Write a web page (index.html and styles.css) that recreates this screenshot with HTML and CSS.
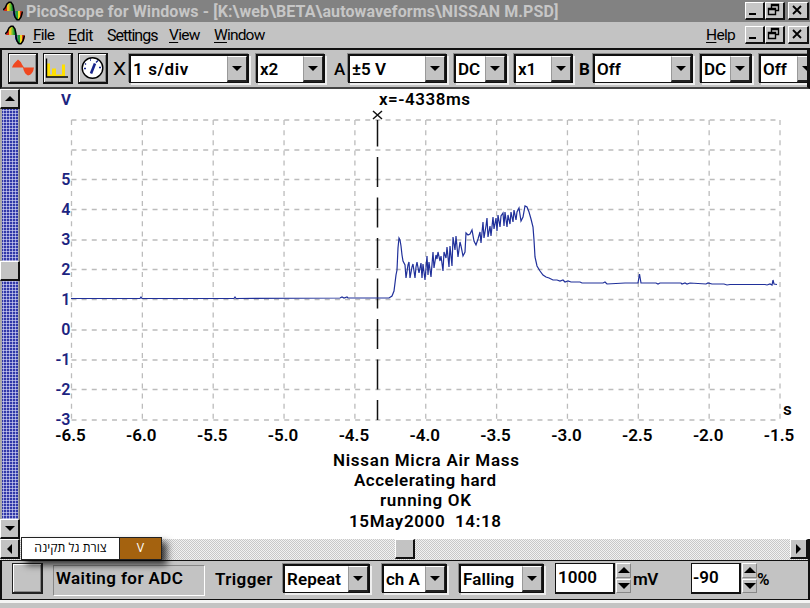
FILE: index.html
```html
<!DOCTYPE html>
<html lang="en">
  <head>
    <meta charset="UTF-8" />
    <meta name="viewport" content="width=device-width, initial-scale=1.0" />
    <title>PicoScope for Windows</title>
    <link rel="stylesheet" href="styles.css">
  </head>
  <body>
    <svg width="0" height="0" class="defs">
      <symbol id="logo" viewBox="0 0 20 20">
        <path d="M1 9L4 4L5 2V10H1Z" fill="#d02818" />
        <path d="M4 3L7 1V10H4Z" fill="#f0c820" />
        <path d="M6.500 1L9 2V10H6.500Z" fill="#70c030" />
        <path d="M8.500 2L11 6V10H8.500Z" fill="#108838" />
        <path d="M10 10H12.500V18L10 14Z" fill="#2838c8" />
        <path d="M12.500 10H15V19H12.500Z" fill="#20a038" />
        <path d="M15 10H17V19H15Z" fill="#f0d820" />
        <path d="M17 10H19.500V14L17 18Z" fill="#d83818" />
        <path d="M0 9L2 7L4 3L6 1.200H8L10 4L11 9V12L12 16L14 18.800H16L18 16L19.500 10.500" fill="none" stroke="#000" stroke-width="1.500" />
      </symbol>
      <symbol id="min" viewBox="0 0 16 14"><path d="M3 10h7v2H3z" /></symbol>
      <symbol id="restore" viewBox="0 0 16 14">
        <path d="M5.500 6V1.500h7v6H10M5 2.500h8M2.500 5.500h7v6h-7zM2 6.500h8" fill="none" stroke="#000" stroke-width="1.400" />
      </symbol>
      <symbol id="close" viewBox="0 0 16 14"><path d="M4 3l8 8M12 3l-8 8" stroke="#000" stroke-width="1.800" /></symbol>
    </svg>

    <div class="titlebar">
      <svg class="logo"><use href="#logo" /></svg>
      <span class="title">PicoScope for Windows - [K:\web\BETA\autowaveforms\NISSAN M.PSD]</span>
      <div class="winbtns">
        <button><svg><use href="#min" /></svg></button>
        <button><svg><use href="#restore" /></svg></button>
        <button class="close"><svg><use href="#close" /></svg></button>
      </div>
    </div>

    <div class="menubar">
      <svg class="logo"><use href="#logo" /></svg>
      <span class="m-file"><u>F</u>ile</span>
      <span class="m-edit"><u>E</u>dit</span>
      <span class="m-settings">Settings</span>
      <span class="m-view"><u>V</u>iew</span>
      <span class="m-window"><u>W</u>indow</span>
      <span class="help"><u>H</u>elp</span>
      <div class="winbtns">
        <button><svg><use href="#min" /></svg></button>
        <button><svg><use href="#restore" /></svg></button>
        <button class="close"><svg><use href="#close" /></svg></button>
      </div>
    </div>

    <div class="toolbar">
      <div class="tool"><svg viewBox="0 0 26 26"><path d="M3 13Q4 10 6 8L9 5Q12 7 13 10L15 13ZM14 13H25Q24 20 19 21Q15 19 14 13Z" fill="#f04820" /></svg></div>
      <div class="tool"><svg viewBox="0 0 26 26"><path d="M3 22V9h3v11h2V14h4v6h6V10h3v12z" fill="#ffe000" /><path d="M2.500 4v18.500H24" fill="none" stroke="#000" stroke-width="1.400" /></svg></div>
      <div class="tool"><svg viewBox="0 0 26 26"><circle cx="13.500" cy="13.500" r="10.300" fill="#fff" stroke="#000" stroke-width="1.400" /><path d="M12 19L16 9" stroke="#18248c" stroke-width="2.600" /><path d="M5 14h2M6 9l1 1M11 5.500h1M17 8l2-2M20 13h2" stroke="#18248c" stroke-width="1.300" /></svg></div>
      <span class="lbl lx">X</span>
      <div class="combo c-time"><span>1 s/div</span><i></i></div>
      <div class="combo c-zoom"><span>x2</span><i></i></div>
      <span class="lbl la">A</span>
      <div class="combo c-range"><span>±5 V</span><i></i></div>
      <div class="combo c-dc"><span>DC</span><i></i></div>
      <div class="combo c-mul"><span>x1</span><i></i></div>
      <span class="lbl lb">B</span>
      <div class="combo c-off"><span>Off</span><i></i></div>
      <div class="combo c-dc2"><span>DC</span><i></i></div>
      <div class="combo c-last"><span>Off</span><i></i></div>
    </div>

    <div class="main">
      <div class="vscroll">
        <div class="sbtn up"></div>
        <div class="thumb"></div>
        <div class="sbtn down"></div>
      </div>
      <svg class="chart" width="790" height="450" viewBox="20 89 790 450">
        <g id="grid"></g>
        <g id="labels"></g>
        <path class="cursor" d="M377.500 120V420" />
        <path class="cross" d="M373 111l9 8M382 111l-9 8" />
        <polyline id="wave" />
        <text class="unit" x="61" y="105" textLength="10" lengthAdjust="spacingAndGlyphs">V</text>
        <text x="379" y="105" textLength="91">x=-4338ms</text>
        <text x="783" y="415">s</text>
        <text x="333" y="466" textLength="186">Nissan Micra Air Mass</text>
        <text x="354" y="486" textLength="142">Accelerating hard</text>
        <text x="380" y="506" textLength="91">running OK</text>
        <text x="349" y="527" textLength="152" xml:space="preserve">15May2000  14:18</text>
      </svg>
    </div>

    <div class="hscroll">
      <div class="sbtn left"></div>
      <div class="thumb"></div>
      <div class="sbtn right"></div>
      <div class="tag"><span class="tag-text" lang="he" dir="rtl">צורת גל תקינה</span><span class="tag-unit">V</span></div>
    </div>

    <div class="status">
      <div class="square"></div>
      <div class="message">Waiting for ADC</div>
      <span class="lbl trigger">Trigger</span>
      <div class="combo s-repeat"><span>Repeat</span><i></i></div>
      <div class="combo s-ch"><span>ch A</span><i></i></div>
      <div class="combo s-fall"><span>Falling</span><i></i></div>
      <div class="field f-mv">1000</div>
      <div class="spin"><b class="inc"></b><b class="dec"></b></div>
      <span class="lbl unit-mv">mV</span>
      <div class="field f-pc">-90</div>
      <div class="spin"><b class="inc"></b><b class="dec"></b></div>
      <span class="lbl unit-pc">%</span>
    </div>
    <script src="chart.js"></script>
  </body>
</html>
```
FILE: styles.css
```css
* {
  box-sizing: border-box;
}

body {
  margin: 0;
  width: 810px;
  height: 608px;
  overflow: hidden;
  display: flex;
  flex-direction: column;
  background: #c3c3c3;
  color: #000;
  font-family: Roboto, "Liberation Sans", sans-serif;
  font-size: 17px;
}

.defs {
  position: absolute;
}

.logo {
  width: 20px;
  height: 20px;
  flex: none;
}

.titlebar {
  height: 22px;
  flex: none;
  display: flex;
  align-items: center;
  background: #828282;
  color: #c6c6c6;
  font-weight: bold;
  font-size: 16px;
  padding: 0 1px 0 3px;
}

.title {
  margin-left: 3px;
  letter-spacing: 0.1px;
  white-space: nowrap;
}

.winbtns {
  display: flex;
  margin-left: auto;
}

.winbtns button {
  width: 20px;
  height: 18px;
  padding: 0;
  background: #c6c6c6;
  border: solid #111;
  border-width: 1px 2px 2px 1px;
  border-top-color: #fff;
  border-left-color: #fff;
  display: flex;
}

.winbtns .close {
  margin-left: 3px;
  width: 21px;
}

.winbtns svg {
  width: 16px;
  height: 14px;
  flex: none;
}

.menubar {
  height: 26px;
  flex: none;
  display: flex;
  align-items: center;
  padding: 0 1px 0 5px;
  font-size: 15.5px;
}

.menubar u {
  text-underline-offset: 2px;
  text-decoration-skip-ink: none;
}

.m-file { width: 35px; margin-left: 8px; letter-spacing: -0.8px; }
.m-edit { width: 39px; letter-spacing: -0.5px; }
.m-settings { width: 62px; letter-spacing: -1px; }
.m-view { width: 45px; letter-spacing: -0.7px; }
.m-window { letter-spacing: -0.8px; }

.m-settings,
.m-edit {
  font-size: 16px;
}

.help {
  margin-left: auto;
  letter-spacing: -0.7px;
}

.menubar .winbtns {
  margin-left: 10px;
}

.toolbar {
  height: 41px;
  flex: none;
  display: flex;
  align-items: center;
  overflow: hidden;
  border: solid #111;
  border-width: 2px 3px 2px 2px;
  border-bottom-color: #444;
  padding-left: 6px;
}

.tool {
  width: 30px;
  height: 31px;
  flex: none;
  margin-right: 5px;
  border: 1px solid #111;
  border-width: 1px 2px 2px 1px;
  box-shadow: inset 1px 1px #fff, inset -1px -1px #888;
}

.tool svg {
  display: block;
  width: 26px;
  height: 27px;
}

.lbl {
  font-weight: 600;
  flex: none;
}

.lx { width: 16px; font-size: 19px; font-weight: normal; transform: scaleX(1.1); transform-origin: left; }
.la { margin-left: 9px; width: 14px; font-weight: 500; }
.lb { margin-left: 6px; width: 14px; font-weight: bold; }

.combo {
  height: 29px;
  flex: none;
  display: flex;
  background: #fff;
  border: 2px solid #111;
  border-bottom-width: 1px;
  box-shadow: -1px -1px #888, 2px 2px #eee;
  overflow: hidden;
  font-weight: 600;
  letter-spacing: 0;
  line-height: 26px;
}

.combo span {
  flex: 1;
  padding-left: 2px;
  white-space: nowrap;
}

.combo i {
  width: 20px;
  flex: none;
  border: solid #222;
  border-width: 1px 1px 2px 1px;
  border-top-color: #fff;
  border-left-color: #999;
  background: #c3c3c3;
  display: flex;
  align-items: center;
  justify-content: center;
}

.combo i::after {
  content: "";
  border: solid transparent;
  border-width: 5px 5px 0;
  border-top-color: #000;
}

.c-time { width: 120px; letter-spacing: 0.6px; }
.c-zoom { width: 69px; margin-left: 7px; }
.c-range { width: 99px; }
.c-dc { width: 53px; margin-left: 7px; }
.c-mul { width: 59px; margin-left: 7px; }
.c-off { width: 100px; }
.c-dc2 { width: 52px; margin-left: 7px; }
.c-last { width: 60px; margin-left: 7px; }

.main {
  height: 450px;
  flex: none;
  display: flex;
}

.vscroll {
  width: 20px;
  display: flex;
  flex-direction: column;
  border-right: 1px solid #777;
  background-color: #3038a8;
  background-image:
    linear-gradient(90deg, #aaa 2px, transparent 2px, transparent 18px, #aaa 18px),
    repeating-linear-gradient(90deg, rgba(225, 225, 250, 0.6) 0 1px, transparent 1px 3px),
    repeating-linear-gradient(rgba(225, 225, 250, 0.6) 0 1px, transparent 1px 3px);
}

.sbtn,
.thumb {
  width: 20px;
  height: 20px;
  flex: none;
  background: #c3c3c3;
  border: solid #111;
  border-width: 1px 2px 2px 1px;
  border-top-color: #fff;
  border-left-color: #fff;
  display: flex;
  align-items: center;
  justify-content: center;
}

.sbtn::after {
  content: "";
  border: 5px solid transparent;
}

.up::after { border-width: 0 5px 5px; border-bottom-color: #000; }
.down::after { border-width: 5px 5px 0; border-top-color: #000; }
.left::after { border-width: 5px 5px 5px 0; border-right-color: #000; }
.right::after { border-width: 5px 0 5px 5px; border-left-color: #000; }

.vscroll .thumb {
  margin-top: 152px;
}

.vscroll .down {
  margin-top: auto;
}

.chart {
  background: #fff;
  flex: none;
}

.chart text {
  font-size: 17px;
  font-weight: 600;
}

.chart .tick-x {
  text-anchor: middle;
}

.chart .tick-y {
  text-anchor: end;
  fill: #1c2480;
  font-size: 16px;
}

.chart .unit {
  fill: #1c2480;
  font-size: 15px;
  font-weight: bold;
}

#grid path {
  fill: none;
  stroke: #bcbcbc;
  stroke-width: 1.3;
  stroke-dasharray: 5 5.13;
}

#wave {
  fill: none;
  stroke: #20309a;
  stroke-width: 1.2;
}

.cursor {
  stroke: #111;
  stroke-width: 1.5;
  stroke-dasharray: 30 10.5;
  stroke-dashoffset: 3.5;
}

.cross {
  fill: none;
  stroke: #111;
  stroke-width: 1.5;
}

.hscroll {
  height: 21px;
  flex: none;
  position: relative;
  display: flex;
  border-right: 2px solid #111;
  background: repeating-conic-gradient(#c8c8c8 0 25%, #f2f2f2 0 50%) 0 0 / 2px 2px;
}

.hscroll .thumb {
  margin-left: 375px;
}

.hscroll .right {
  margin-left: auto;
  width: 18px;
}

.tag {
  position: absolute;
  left: 21px;
  top: -2px;
  width: 141px;
  height: 23px;
  display: flex;
  border: 1px solid #222;
  box-shadow: 5px 5px 7px rgba(0, 0, 0, 0.75);
  font-family: "Open Sans", "DejaVu Sans", sans-serif;
  font-size: 12.3px;
  line-height: 20px;
  text-align: center;
}

.tag-text {
  width: 97px;
  background: #fff;
  white-space: nowrap;
}

.tag-unit {
  flex: 1;
  background: #a4620f;
  color: #fff;
  border-left: 1px solid #222;
}

.status {
  height: 40px;
  flex: none;
  display: flex;
  align-items: flex-start;
  padding: 2px 0 0 10px;
  border: solid #111;
  border-width: 1px 2px 1px 2px;
  box-shadow: 0 3px #f4f4f4;
}

.square {
  width: 31px;
  height: 31px;
  border: 2px solid #222;
  border-width: 1px 2px 2px 1px;
  box-shadow: inset 1px 1px #fff, inset -1px -1px #888;
}

.message {
  width: 152px;
  height: 31px;
  margin: 2px 0 0 10px;
  padding-left: 2px;
  border: 1px solid #fff;
  border-top-color: #888;
  border-left-color: #888;
  font-weight: 600;
  letter-spacing: 0.4px;
  line-height: 24px;
  white-space: nowrap;
}

.status .lbl {
  margin-top: 6px;
}

.status .trigger {
  margin-left: 10px;
  width: 68px;
  letter-spacing: 0.4px;
}

.status .combo {
  margin-top: 1px;
}

.s-repeat { width: 87px; }
.s-ch { width: 65px; margin-left: 12px; }
.s-fall { width: 85px; margin-left: 12px; }

.s-repeat,
.s-fall {
  letter-spacing: 0.1px;
}

.field {
  height: 31px;
  flex: none;
  background: #fff;
  border: 1px solid #111;
  border-width: 1px 2px 2px 1px;
  padding-left: 2px;
  font-weight: 600;
  line-height: 26px;
}

.f-mv { width: 60px; margin-left: 11px; }
.f-pc { width: 50px; margin-left: 32px; padding-left: 1px; }

.spin {
  width: 15px;
  height: 30px;
  margin-left: 1px;
  flex: none;
  display: flex;
  flex-direction: column;
  gap: 1px;
}

.spin b {
  flex: 1;
  border: 1px solid #888;
  border-top-color: #fff;
  border-left-color: #fff;
  display: flex;
  align-items: center;
  justify-content: center;
}

.spin b::after {
  content: "";
  border: solid transparent;
}

.spin .inc::after { border-width: 0 6px 6px; border-bottom-color: #000; }
.spin .dec::after { border-width: 6px 6px 0; border-top-color: #000; }

.unit-mv { width: 26px; margin-left: 2px; letter-spacing: -0.5px; }
```
FILE: chart.js
```js
var NS = "http://www.w3.org/2000/svg";
var grid = document.getElementById("grid");
var labels = document.getElementById("labels");
var rows = [120, 150, 179.5, 209.5, 240, 269.5, 299.5, 330, 360, 389.5, 420];

function line(d) {
  var p = document.createElementNS(NS, "path");
  p.setAttribute("d", d);
  grid.appendChild(p);
}

function label(text, x, y, cls) {
  var t = document.createElementNS(NS, "text");
  t.setAttribute("x", x);
  t.setAttribute("y", y);
  t.setAttribute("class", cls);
  t.textContent = text;
  labels.appendChild(t);
}

for (var i = 0; i <= 10; i++) {
  var x = 71.5 + i * 70.85;
  line("M" + x + " 120V420");
  line("M71.5 " + rows[i] + "H778");
  label((-6.5 + i / 2).toFixed(1), x - 1, 441, "tick-x");
  if (i > 1) label(7 - i, 70.5, rows[i] + 5, "tick-y");
}

// trace of the air mass sensor, x y pairs
document.getElementById("wave").setAttribute("points",
  "71,298.5 140,298.5 141,297 142,298.5 234,298.5 235,297 236,298.5 340,298 342,297 344,298 347,297 348,298 " +
  "389,298 392,296 394,291 396,275 397,270 398,248 399,238 400,240 401,246 402,255 403,261 405,265 406,278 " +
  "408,265 409,262 410,278 412,267 413,264 415,278 416,267 417,262 419,273 421,263 422,278 423,264 425,280 " +
  "427,256 428,275 429,262 431,277 433,252 434,268 436,255 437,259 438,252 440,261 441,256 443,271 444,252 " +
  "446,258 447,247 449,267 450,246 452,266 453,237 455,250 456,236 458,257 460,242 461,246 463,256 465,252 " +
  "466,233 468,235 470,234 472,230 474,241 476,245 478,239 480,232 481,243 483,222 484,238 486,226 487,218 " +
  "488,237 490,226 491,236 493,217 494,229 496,218 497,231 498,215 500,227 501,216 503,213 504,226 505,212 " +
  "507,227 508,215 510,224 511,212 513,222 514,210 516,220 517,212 519,208 521,221 523,217 525,206 527,207 " +
  "529,212 531,219 533,227 534,240 535,257 537,266 540,271 543,275 546,277 549,278 553,280 557,280 560,281 " +
  "563,280 565,282 568,281 571,282 580,282 582,283 603,283 605,282 607,284 625,283 638,283 639.5,274 641,283 " +
  "656,283 658,284 660,283 681,283 682,284 685,283 687,284 690,283 706,284 708,283 712,284 724,284 727,285 " +
  "730,284.5 765,284.5 767,285 770,284 772,285 773,280 774,284 777,284.5");
```
